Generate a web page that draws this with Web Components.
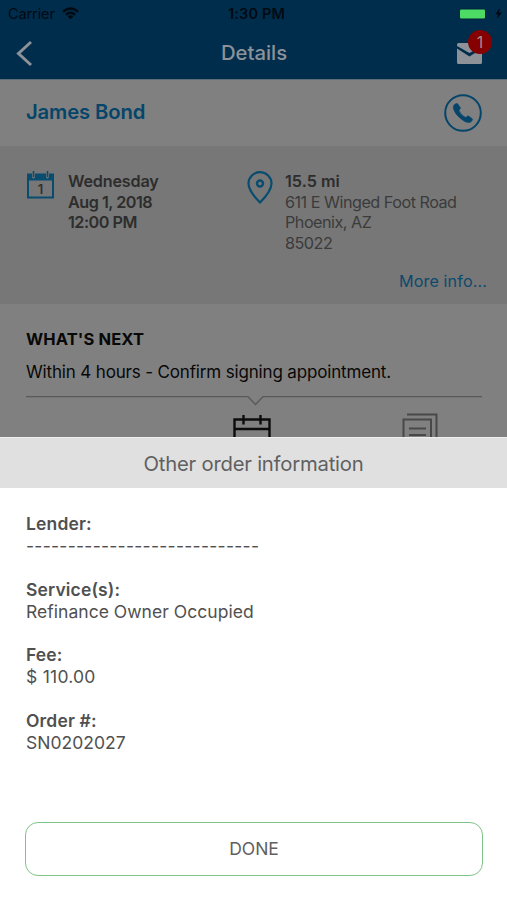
<!DOCTYPE html>
<html lang="en">
<head>
<meta charset="utf-8">
<meta name="viewport" content="width=device-width, initial-scale=1">
<title>Details</title>
<style>
  html, body { margin: 0; height: 100%; }
  body {
    font-family: Inter, "Liberation Sans", sans-serif;
    background: #fff;
    overflow: hidden;
  }
</style>
</head>
<body>
<order-screen></order-screen>

<script>
const html = (strings, ...values) => String.raw({ raw: strings }, ...values);
const css = html;

class Component extends HTMLElement {
  constructor() {
    super();
    this.attachShadow({ mode: 'open' });
  }

  connectedCallback() {
    this.shadowRoot.innerHTML = `
      <style>* { box-sizing: border-box; } svg { display: block; flex: none; } ${this.styles()}</style>
      ${this.render()}
    `;
  }

  render() { return ''; }
  styles() { return ''; }

  static registerTag(tag) {
    if (!customElements.get(tag)) customElements.define(tag, this);
  }
}

class StatusBar extends Component {
  styles() {
    return css`
      :host {
        display: grid;
        grid-template-columns: 1fr auto 1fr;
        align-items: center;
        height: 27px;
        padding: 0 5px 0 8px;
        color: #000a12;
        font-size: 14.5px;
        line-height: 27px;
      }
      div { display: flex; align-items: center; }
      .carrier { gap: 7px; letter-spacing: -.1px; }
      .time { font-weight: 600; letter-spacing: .15px; padding-left: 3px; }
      .battery { justify-content: flex-end; gap: 9px; }
    `;
  }

  render() {
    return html`
      <div class="carrier">
        <span>Carrier</span>
        <svg width="17" height="13" viewBox="0 0 17 13" fill="none" stroke="currentColor" stroke-width="2.4">
          <path d="M1 4.8Q8.5-2 16 4.8M3.9 7.8Q8.5 3.6 13.1 7.8"/>
          <path d="M8.5 12.3 5.7 9.5Q8.5 7.2 11.3 9.5Z" fill="currentColor" stroke="none"/>
        </svg>
      </div>
      <div class="time">1:30 PM</div>
      <div class="battery">
        <svg width="27" height="12" viewBox="0 0 27 12">
          <rect x=".5" y=".5" width="26" height="11" rx="2" fill="#00223b"/>
          <rect x="1" y="1.5" width="25" height="9" rx="1" fill="#4cdb64"/>
        </svg>
        <svg width="7" height="11" viewBox="0 0 7 11"><path d="M4.8 0 .3 6.2H3L2.2 11 6.7 4.6H4Z" fill="currentColor"/></svg>
      </div>
    `;
  }
}
StatusBar.registerTag('status-bar');

class NavBar extends Component {
  styles() {
    return css`
      :host {
        display: grid;
        grid-template-columns: 1fr auto 1fr;
        align-items: center;
        height: 52px;
        padding: 0 15px 0 16px;
        color: #8c9298;
      }
      h1 { margin: 0; font-size: 20.3px; font-weight: 500; line-height: 52px; letter-spacing: 0; }
      .mail { position: relative; justify-self: end; padding-right: 10px; }
      .badge {
        position: absolute;
        right: 0;
        top: -13px;
        width: 24px;
        height: 24px;
        border-radius: 50%;
        background: #850000;
        color: #a58c8c;
        font-size: 16px;
        line-height: 24px;
        text-align: center;
      }
    `;
  }

  render() {
    return html`
      <svg width="17" height="27" viewBox="0 0 17 27" fill="none" stroke="currentColor" stroke-width="3">
        <path d="M15 2 2.5 13.5 15 25"/>
      </svg>
      <h1><slot></slot></h1>
      <div class="mail">
        <svg width="25" height="21" viewBox="0 0 25 21">
          <path d="M1.5 0H23.5Q25 0 25 1.5V3L12.5 10 0 3V1.5Q0 0 1.5 0Z" fill="currentColor"/>
          <path d="M0 5.5 12.5 13.5 25 5.5V19.5Q25 21 23.5 21H1.5Q0 21 0 19.5Z" fill="currentColor"/>
        </svg>
        <span class="badge">${this.getAttribute('unread')}</span>
      </div>
    `;
  }
}
NavBar.registerTag('nav-bar');

class ContactRow extends Component {
  styles() {
    return css`
      :host {
        display: flex;
        flex: none;
        align-items: center;
        justify-content: space-between;
        box-sizing: border-box;
        height: 67px;
        padding: 0 25px 0 26px;
        border-top: 1px solid #5d6c78;
        background: #808080;
        color: #06456a;
      }
      h2 { margin: 0 0 3px; font-size: 20.3px; font-weight: 600; letter-spacing: -.15px; }
    `;
  }

  render() {
    return html`
      <h2><slot></slot></h2>
      <svg width="38" height="38" viewBox="0 0 38 38">
        <circle cx="19" cy="19" r="17.8" fill="none" stroke="currentColor" stroke-width="2"/>
        <path d="M10.2 10.8Q12 9 13.6 9.7L16.4 13.7Q16.6 15 14.9 16.2Q16 20.5 21.7 23.5Q23.5 21.5 24.6 22L28.5 25Q28.6 27 26.4 28.2Q23 29.5 17.5 25.3Q10.500 20 9.4 14.5Q9 12 10.2 10.8Z" fill="currentColor" stroke="currentColor" stroke-width=".6"/>
      </svg>
    `;
  }
}
ContactRow.registerTag('contact-row');

class AppointmentInfo extends Component {
  styles() {
    return css`
      :host {
        display: flex;
        flex: none;
        flex-direction: column;
        box-sizing: border-box;
        height: 158px;
        padding: 25px 20px 0 26px;
        background: #777;
        color: #3b3b3b;
        font-size: 16.2px;
        line-height: 20.5px;
      }
      .columns { display: grid; grid-template-columns: 220px 1fr; }
      .item { display: flex; }
      .when svg { margin-right: 13px; }
      .where svg { margin-right: 12px; margin-left: 1px; }
      b { display: block; font-weight: 600; color: #2d2d2d; letter-spacing: -.2px; }
      .where b { letter-spacing: 0; }
      .when b + b { letter-spacing: -.5px; }
      .address { letter-spacing: -.5px; }
      a { align-self: flex-end; margin-top: 18px; color: #0d4a6c; letter-spacing: .1px; }
      text { font: 600 13px Inter, sans-serif; }
    `;
  }

  render() {
    return html`
      <div class="columns">
        <div class="item when">
          <svg width="29" height="28" viewBox="0 0 29 28">
            <path d="M2 3.5V26.5H27V3.5" fill="none" stroke="#084d70" stroke-width="2"/>
            <path d="M1 2.500H6V6Q7.5 9 9 6V2.5H20V6Q21.5 9 23 6V2.5H28V9.5H1Z" fill="#084d70"/>
            <path d="M7.5 0V6M21.5 0V6" stroke="#084d70" stroke-width="1.6"/>
            <text x="14.5" y="22.5" text-anchor="middle" fill="#303030">1</text>
          </svg>
          <div>
            <b>Wednesday</b>
            <b>Aug 1, 2018</b>
            <b>12:00 PM</b>
          </div>
        </div>
        <div class="item where">
          <svg width="26" height="34" viewBox="0 0 26 34" fill="none" stroke="#084d70">
            <path d="M13 31.5Q1.5 20 1.5 12.500A11.5 11.3 0 0 1 24.5 12.5Q24.5 20 13 31.5Z" stroke-width="2.2"/>
            <circle cx="13" cy="12.5" r="3" stroke-width="2.4"/>
          </svg>
          <div>
            <b>15.5 mi</b>
            <div class="address">611 E Winged Foot Road<br>Phoenix, AZ<br>85022</div>
          </div>
        </div>
      </div>
      <a>More info...</a>
    `;
  }
}
AppointmentInfo.registerTag('appointment-info');

class NextStep extends Component {
  styles() {
    return css`
      :host {
        display: block;
        flex: 1;
        min-height: 0;
        padding: 25px 25px 0 26px;
        background: #808080;
        color: #080808;
      }
      h3 { margin: 0; font-size: 16.5px; font-weight: 700; line-height: 20px; letter-spacing: .12px; }
      p { margin: 12px 0 13px; font-size: 17px; line-height: 22px; letter-spacing: -.16px; white-space: nowrap; }
      .steps { margin-top: 3px; }
    `;
  }

  render() {
    return html`
      <h3>WHAT'S NEXT</h3>
      <p>Within 4 hours - Confirm signing appointment.</p>
      <svg width="456" height="10" viewBox="0 0 456 10" fill="none" stroke="#595959" stroke-width="1.3">
        <path d="M0 .7H222L229.5 8.5 237 .7H456"/>
      </svg>
      <svg class="steps" width="456" height="40" viewBox="0 0 456 40" fill="none">
        <path d="M208.5 40V10.5H243.5V40M208 20H244M217.5 6V15.5M234.5 6V15.5" stroke="#0c0c0c" stroke-width="2.4"/>
        <path d="M377.5 40V10.5H405V40M381 5.5H410.5V40M383 19.5H400M383 26H400" stroke="#484848" stroke-width="2"/>
      </svg>
    `;
  }
}
NextStep.registerTag('next-step');

class InfoSheet extends Component {
  styles() {
    return css`
      :host {
        display: flex;
        flex-direction: column;
        flex: 1;
        background: #fff;
        color: #505050;
      }
      header {
        height: 51px;
        border-top: 1px solid #eee;
        background: #e0e0e0;
        color: #606060;
        font-size: 20.3px;
        line-height: 51px;
        letter-spacing: -.22px;
        text-align: center;
      }
      .fields { display: flex; flex-direction: column; gap: 21.7px; padding: 25px 26px 0; }
      footer { margin-top: auto; padding: 0 24px 24px 25px; }
      button {
        display: block;
        width: 100%;
        height: 54px;
        padding: 0 0 2px;
        border: 1.5px solid #7fc388;
        border-radius: 13px;
        background: none;
        color: #606060;
        font: 400 17.5px Inter, sans-serif;
      }
    `;
  }

  render() {
    return html`
      <header>${this.getAttribute('heading')}</header>
      <div class="fields"><slot></slot></div>
      <footer><button>DONE</button></footer>
    `;
  }
}
InfoSheet.registerTag('info-sheet');

class InfoField extends Component {
  styles() {
    return css`
      :host { display: block; font-size: 17.5px; line-height: 22px; white-space: nowrap; }
      b { display: block; font-weight: 600; letter-spacing: .15px; }
      span { letter-spacing: var(--value-spacing, .03px); }
    `;
  }

  render() {
    return html`<b>${this.getAttribute('label')}</b><span><slot></slot></span>`;
  }
}
InfoField.registerTag('info-field');

class OrderScreen extends Component {
  styles() {
    return css`
      :host { display: flex; flex-direction: column; height: 900px; }
      .details { display: flex; flex-direction: column; height: 437px; overflow: hidden; }
      .top { flex: none; background: #002d4c; }
    `;
  }

  render() {
    return html`
      <div class="details">
        <div class="top">
          <status-bar></status-bar>
          <nav-bar unread="1">Details</nav-bar>
        </div>
        <contact-row>James Bond</contact-row>
        <appointment-info></appointment-info>
        <next-step></next-step>
      </div>
      <info-sheet heading="Other order information">
        <info-field label="Lender:" style="--value-spacing: .28px">----------------------------</info-field>
        <info-field label="Service(s):">Refinance Owner Occupied</info-field>
        <info-field label="Fee:" style="--value-spacing: .25px">$ 110.00</info-field>
        <info-field label="Order #:">SN0202027</info-field>
      </info-sheet>
    `;
  }
}
OrderScreen.registerTag('order-screen');
</script>
</body>
</html>
